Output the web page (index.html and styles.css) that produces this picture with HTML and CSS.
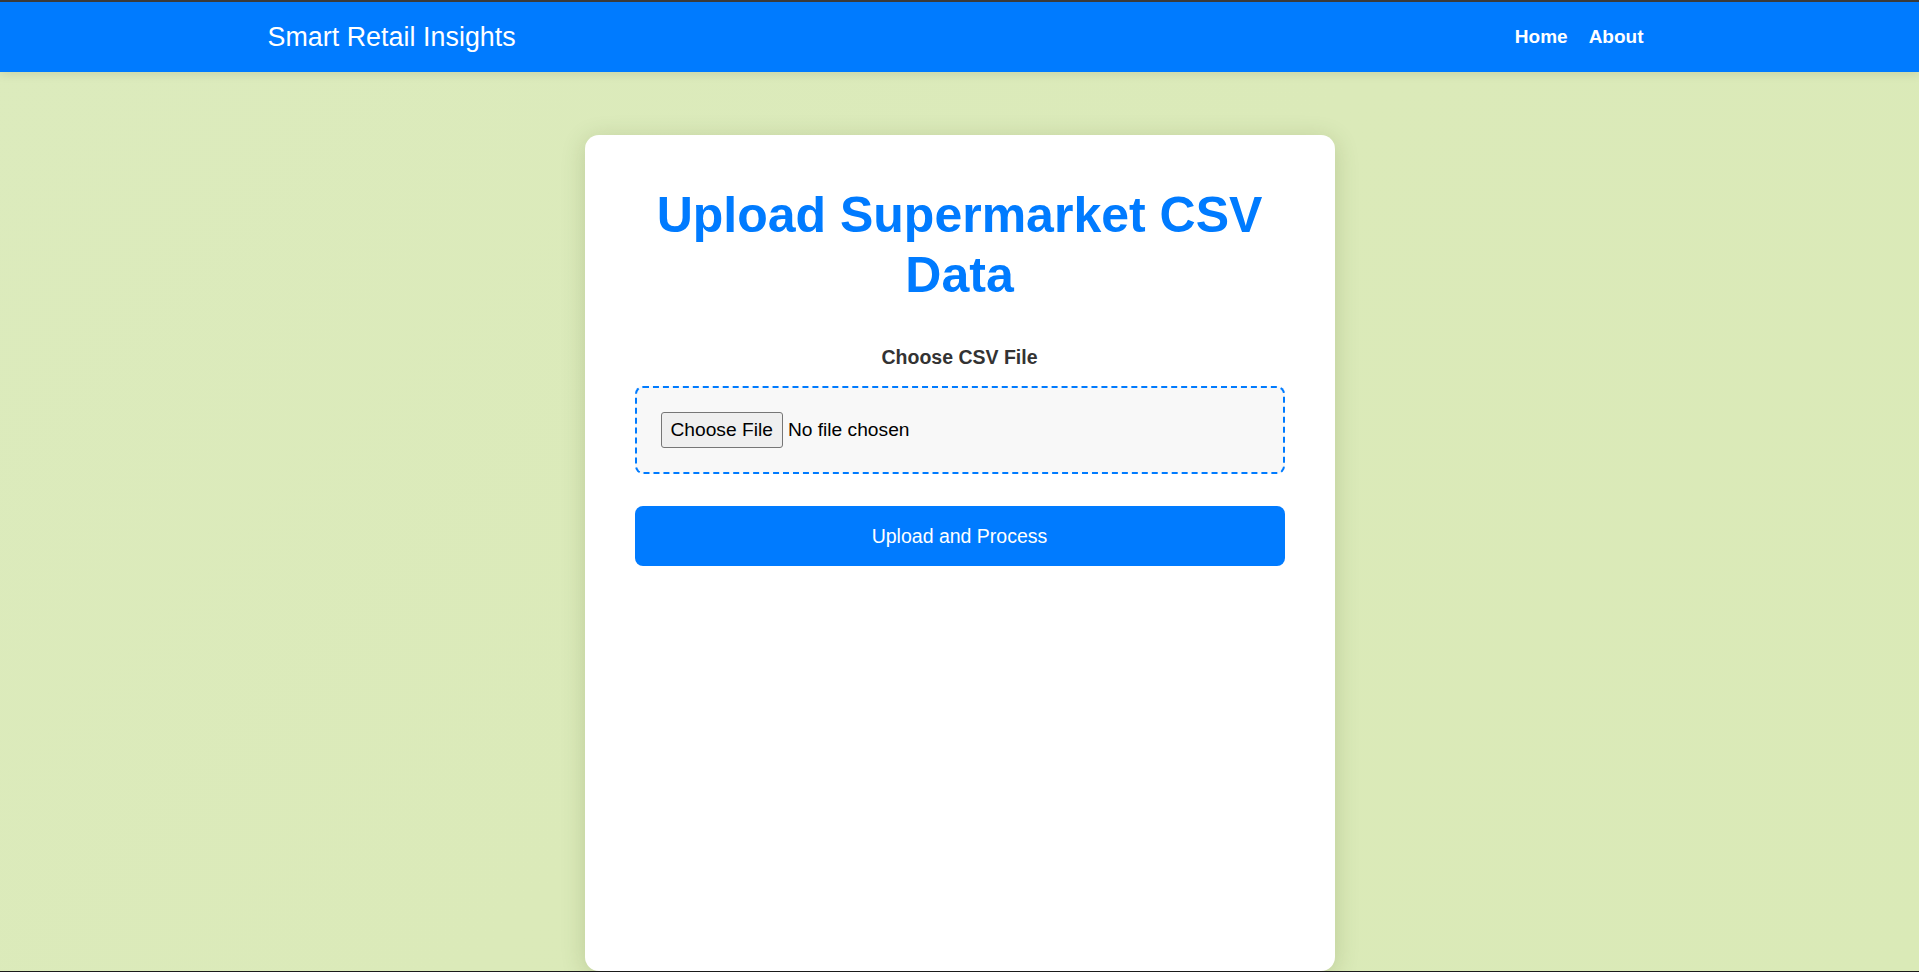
FILE: index.html
```html
<!DOCTYPE html>
<html lang="en">
<head>
<meta charset="utf-8">
<title>Smart Retail Insights</title>
<link rel="stylesheet" href="styles.css">
</head>
<body>
<header class="navbar">
  <div class="nav-inner">
    <a class="brand" href="#">Smart Retail Insights</a>
    <nav class="nav-links">
      <a href="#">Home</a>
      <a href="#">About</a>
    </nav>
  </div>
</header>
<main class="main">
  <section class="card">
    <h1 class="title">Upload Supermarket CSV Data</h1>
    <form class="upload-form" onsubmit="return false;">
      <label class="file-label" for="csv">Choose CSV File</label>
      <div class="drop-zone">
        <input class="file-input" type="file" id="csv" accept=".csv">
      </div>
      <button class="submit-btn" type="submit">Upload and Process</button>
    </form>
  </section>
</main>
</body>
</html>
```

FILE: styles.css
```css
* { box-sizing: border-box; }

html, body {
  margin: 0;
  padding: 0;
}

body {
  height: 100vh;
  overflow: hidden;
  font-family: "Liberation Sans", Arial, sans-serif;
  background: linear-gradient(135deg, #dcebbd 0%, #dbeab9 50%, #daeab7 100%);
  border-top: 2px solid #3a3a3a;
  border-bottom: 1px solid #1a1a1a;
  display: flex;
  flex-direction: column;
}

.navbar {
  background: #007bff;
  height: 70px;
  flex: 0 0 auto;
  box-shadow: 0 2px 10px rgba(0, 0, 0, 0.1);
  position: relative;
  z-index: 1;
}

.nav-inner {
  max-width: 1384px;
  height: 100%;
  margin: 0 auto;
  display: flex;
  align-items: center;
  justify-content: space-between;
}

.brand {
  color: #fff;
  text-decoration: none;
  font-size: 26.8px;
  font-weight: normal;
  letter-spacing: 0.05px;
}

.nav-links {
  display: flex;
  gap: 5px;
}

.nav-links a {
  color: #fff;
  text-decoration: none;
  font-weight: bold;
  font-size: 19px;
  padding: 0 8px;
}

.main {
  flex: 1 1 auto;
  padding-top: 63px;
  display: flex;
  justify-content: center;
  align-items: flex-start;
}

.card {
  width: 750px;
  height: 836px;
  background: #fff;
  border-radius: 14px;
  padding: 50px;
  box-shadow: 0 4px 24px rgba(60, 80, 20, 0.2);
  text-align: center;
}

.title {
  margin: 0 0 40px;
  color: #007bff;
  font-size: 50px;
  line-height: 60px;
  font-weight: bold;
}

.upload-form {
  display: flex;
  flex-direction: column;
}

.file-label {
  display: block;
  color: #333;
  font-weight: bold;
  font-size: 19.5px;
  line-height: 24px;
  margin-bottom: 17px;
}

.drop-zone {
  border: 2px dashed #007bff;
  border-radius: 8px;
  background: #f8f8f8;
  padding: 24px;
  text-align: left;
  margin-bottom: 32px;
}

.file-input {
  display: block;
  font-family: "Liberation Sans", Arial, sans-serif;
  font-size: 19.2px;
  color: #000;
  height: 36px;
  line-height: 36px;
}

.file-input::file-selector-button {
  font-family: "Liberation Sans", Arial, sans-serif;
  font-size: 19.2px;
  height: 36px;
  padding: 0 9px;
  margin-right: 5px;
  background: #efefef;
  border: 1px solid #767676;
  border-radius: 3px;
  color: #000;
}

.submit-btn {
  height: 60px;
  width: 100%;
  border: none;
  border-radius: 8px;
  background: #007bff;
  color: #fff;
  font-family: "Liberation Sans", Arial, sans-serif;
  font-size: 19.5px;
  cursor: pointer;
}
```
